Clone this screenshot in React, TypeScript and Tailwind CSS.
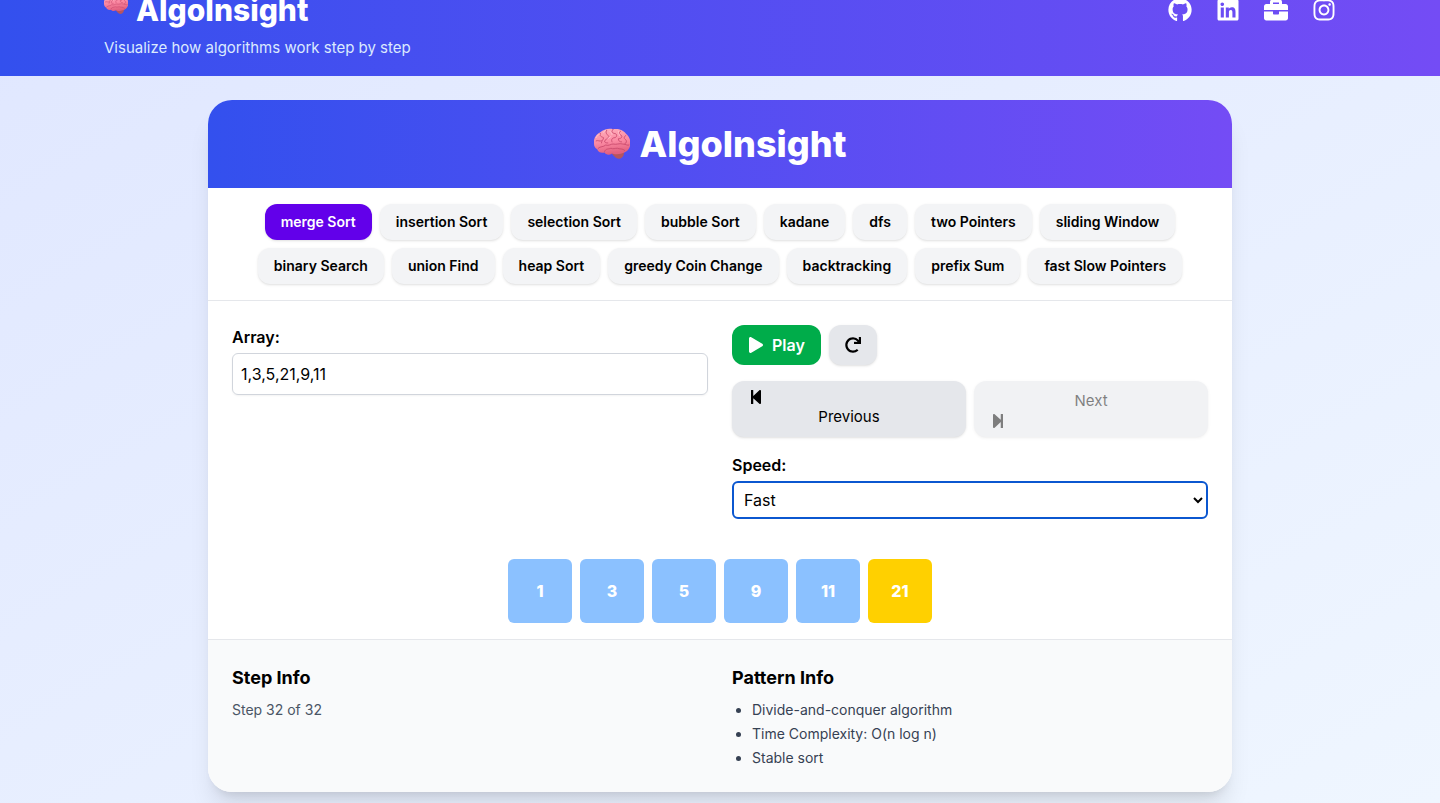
import { useState } from "react";
import {
  FaGithub,
  FaLinkedin,
  FaBriefcase,
  FaInstagram,
  FaPlay,
  FaRedo,
  FaStepBackward,
  FaStepForward,
} from "react-icons/fa";

const ALGORITHMS = [
  "merge Sort",
  "insertion Sort",
  "selection Sort",
  "bubble Sort",
  "kadane",
  "dfs",
  "two Pointers",
  "sliding Window",
  "binary Search",
  "union Find",
  "heap Sort",
  "greedy Coin Change",
  "backtracking",
  "prefix Sum",
  "fast Slow Pointers",
];

const SORTED = [1, 3, 5, 9, 11, 21];
const ACTIVE_INDEX = 5;

const PATTERN_INFO = [
  "Divide-and-conquer algorithm",
  "Time Complexity: O(n log n)",
  "Stable sort",
];

const LINKS = [
  { label: "GitHub", Icon: FaGithub },
  { label: "LinkedIn", Icon: FaLinkedin },
  { label: "Portfolio", Icon: FaBriefcase },
  { label: "Instagram", Icon: FaInstagram },
];

function Brain({ className }: { className: string }) {
  return (
    <svg viewBox="1 2 34 32" className={className} aria-hidden="true">
      <defs>
        <linearGradient id="brain-fill" x1="0" y1="0" x2="0.2" y2="1">
          <stop offset="0" stopColor="#ffb0bc" />
          <stop offset="0.55" stopColor="#fb8aa3" />
          <stop offset="1" stopColor="#e2607f" />
        </linearGradient>
      </defs>
      <path d="M17 26c3-2 9-3 12-1 1 3-1 6-4 7-3 0-5-2-8-6z" fill="#b5555f" />
      <path
        d="M1 18C0 13 3 9 7 7c3-3 8-4 12-3 5-1 10 1 12 4 4 3 5 8 4 12-1 4-4 6-8 7-3 1-7 1-9 0-3 2-6 1-7-1-3 1-6 0-7-3-2-1-3-3-3-5z"
        fill="url(#brain-fill)"
      />
      <g fill="none" stroke="#c94a6c" strokeWidth="0.8" strokeLinecap="round">
        <path d="M5 22c2-2 5-1 7-3 3 1 5-1 7-1 3 1 6-1 9 0 3 0 5 2 6 1" />
        <path d="M11 25c1-3 4-2 6-3 2 1 4 0 6 0 2 1 5 0 7 2" />
        <path d="M3 15c2-1 3 1 5 0M7 8c-1 3 1 3 3 4 0 2-2 3-2 5" />
        <path d="M13 5c-2 3 1 4 2 6-1 3-4 2-4 5 1 1 2 1 3 1" />
        <path d="M19 4c-1 2-2 3 1 4 3 0 3 3 1 4-3 0-4 2-3 4" />
        <path d="M26 6c-2 1-1 3 1 4 1 2-1 3-3 3 0 2 1 3 3 3" />
        <path d="M31 10c-2 1-2 3 0 4 1 1 1 3-1 4" />
      </g>
      <g fill="none" stroke="#ffd0d5" strokeWidth="0.8" strokeLinecap="round" opacity="0.8">
        <path d="M3 12c1-2 2-3 3-3M10 7c0-1 1-1 2-2M16 6c1 1 2 2 2 3M24 6c0 2 1 3 1 4M14 13c0-1 2-1 3-2" />
      </g>
    </svg>
  );
}

export default function App() {
  const [selected, setSelected] = useState("merge Sort");
  const [array, setArray] = useState("1,3,5,21,9,11");
  const [speed, setSpeed] = useState("Fast");

  return (
    <div className="min-h-screen bg-linear-to-br from-[#e0e7ff] to-[#eff6ff] font-['Inter',sans-serif] text-black">
      <div className="flow-root overflow-hidden">
        <header className="-mt-6 bg-linear-to-r/srgb from-[#3350ee] to-[#744cf5] py-4 text-white">
          <div className="mx-auto max-w-7xl px-6">
            <div className="flex items-center justify-between">
              <h1 className="flex items-start gap-2 text-3xl font-extrabold">
                <Brain className="size-6" />
                AlgoInsight
              </h1>
              <nav className="flex gap-6">
                {LINKS.map(({ label, Icon }) => (
                  <a key={label} href="#" aria-label={label}>
                    <Icon className="size-6" />
                  </a>
                ))}
              </nav>
            </div>
            <p className="mt-2 text-[15px] leading-6 text-[#dbeafe]">
              Visualize how algorithms work step by step
            </p>
          </div>
        </header>
      </div>

      <main className="px-6 pt-6 pb-3">
        <div className="mx-auto max-w-5xl overflow-hidden rounded-3xl bg-white shadow-xl">
          <div className="flex items-center justify-center gap-2.5 bg-linear-to-r/srgb from-[#3350ee] to-[#744cf5] p-6 text-white">
            <Brain className="size-9" />
            <h2 className="text-4xl font-extrabold">AlgoInsight</h2>
          </div>

          <div className="flex flex-wrap justify-center gap-2 border-b border-gray-200 p-4">
            {ALGORITHMS.map((name) => (
              <button
                key={name}
                type="button"
                onClick={() => setSelected(name)}
                className={
                  name === selected
                    ? "rounded-xl bg-[#6200ea] px-4 py-2 text-sm font-semibold text-white shadow-sm"
                    : "rounded-xl bg-gray-100 px-4 py-2 text-sm font-semibold shadow-sm"
                }
              >
                {name}
              </button>
            ))}
          </div>

          <div className="grid grid-cols-2 gap-6 p-6">
            <div>
              <label htmlFor="array" className="block font-semibold">
                Array:
              </label>
              <input
                id="array"
                type="text"
                value={array}
                onChange={(e) => setArray(e.target.value)}
                className="mt-1 block w-full rounded-md border border-gray-300 p-2 shadow-xs outline-none"
              />
            </div>

            <div className="flex flex-col gap-4">
              <div className="flex gap-2">
                <button
                  type="button"
                  className="flex items-center gap-2 rounded-xl bg-[#00ac4a] px-4 py-2 font-semibold text-white"
                >
                  <FaPlay className="size-4" />
                  Play
                </button>
                <button
                  type="button"
                  aria-label="Reset"
                  className="rounded-xl bg-gray-200 px-4 py-2 shadow-sm"
                >
                  <FaRedo className="size-4" />
                </button>
              </div>

              <div className="grid grid-cols-2 gap-2">
                <button
                  type="button"
                  className="rounded-xl bg-gray-200 px-4 py-2 text-[15px] leading-6 shadow-sm"
                >
                  <FaStepBackward className="size-4" />
                  Previous
                </button>
                <button
                  type="button"
                  disabled
                  className="rounded-xl bg-gray-200 px-4 py-2 text-[15px] leading-6 opacity-50 shadow-sm"
                >
                  Next
                  <FaStepForward className="size-4" />
                </button>
              </div>

              <div>
                <label htmlFor="speed" className="block font-semibold">
                  Speed:
                </label>
                <select
                  id="speed"
                  value={speed}
                  onChange={(e) => setSpeed(e.target.value)}
                  className="mt-1 block h-[38px] w-full rounded-md border-2 border-[#0b57d0] bg-white pl-1.5 outline-none"
                >
                  <option>Slow</option>
                  <option>Medium</option>
                  <option>Fast</option>
                </select>
              </div>
            </div>
          </div>

          <div className="flex justify-center gap-2 border-b border-gray-200 p-4">
            {SORTED.map((value, i) => (
              <div
                key={value}
                className={
                  i === ACTIVE_INDEX
                    ? "flex size-16 items-center justify-center rounded-md bg-[#ffd000] font-extrabold text-white"
                    : "flex size-16 items-center justify-center rounded-md bg-[#8bc1ff] font-extrabold text-white"
                }
              >
                {value}
              </div>
            ))}
          </div>

          <div className="grid grid-cols-2 gap-6 bg-gray-50 p-6">
            <section>
              <h3 className="mb-2 text-lg font-bold">Step Info</h3>
              <p className="text-sm text-gray-600">Step 32 of 32</p>
            </section>
            <section>
              <h3 className="mb-2 text-lg font-bold">Pattern Info</h3>
              <ul className="list-disc space-y-1 pl-5 text-sm text-gray-700">
                {PATTERN_INFO.map((item) => (
                  <li key={item}>{item}</li>
                ))}
              </ul>
            </section>
          </div>
        </div>
      </main>
    </div>
  );
}
